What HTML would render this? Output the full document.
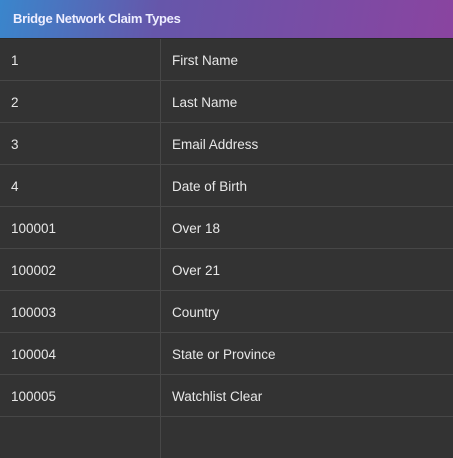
<!DOCTYPE html>
<html><head><style>
html,body{margin:0;padding:0;background:#333;}
body{width:453px;height:458px;overflow:hidden;position:relative;font-family:"Liberation Sans",sans-serif;}
.wrap{position:absolute;left:0;top:0;width:453px;height:458px;background:#333;border-radius:0 0 4px 4px;overflow:hidden;}
.hd{height:38px;background:linear-gradient(100deg,#3a86cc 0%,#6656aa 35%,#8a44a0 100%);color:#eef;font-weight:bold;font-size:13px;line-height:38px;padding-left:13px;letter-spacing:-0.3px;border-bottom:1px solid #2a2a2a;}
.row{height:41px;border-bottom:1px solid #474747;position:relative;color:#e8e8e8;font-size:13.5px;line-height:43px;}
.row span{position:absolute;}
.a{left:11px}.b{left:172px}
.div{position:absolute;left:160px;top:39px;width:1px;height:419px;background:#474747;}
</style></head><body><div class="wrap">
<div class="hd">Bridge Network Claim Types</div>
<div class="row"><span class="a">1</span><span class="b">First Name</span></div>
<div class="row"><span class="a">2</span><span class="b">Last Name</span></div>
<div class="row"><span class="a">3</span><span class="b">Email Address</span></div>
<div class="row"><span class="a">4</span><span class="b">Date of Birth</span></div>
<div class="row"><span class="a">100001</span><span class="b">Over 18</span></div>
<div class="row"><span class="a">100002</span><span class="b">Over 21</span></div>
<div class="row"><span class="a">100003</span><span class="b">Country</span></div>
<div class="row"><span class="a">100004</span><span class="b">State or Province</span></div>
<div class="row"><span class="a">100005</span><span class="b">Watchlist Clear</span></div>
<div class="div"></div>
</div></body></html>
